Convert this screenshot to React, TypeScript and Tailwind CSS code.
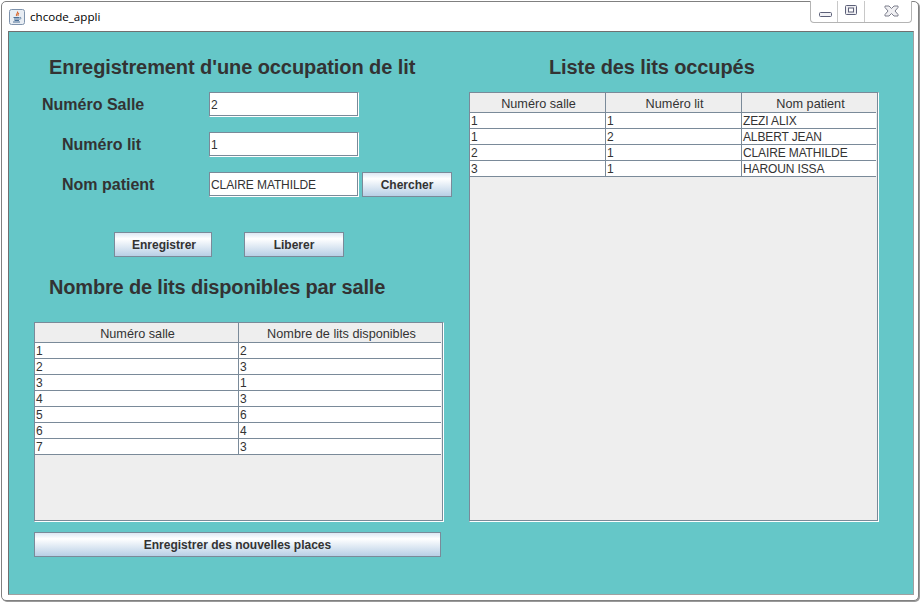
const sans = "font-['Liberation_Sans',Arial,sans-serif]";

function Field({ value }: { value: string }) {
  return (
    <div className="w-[150px] h-[25px] border border-[#7a8a99] border-r-white border-b-white shadow-[inset_-1px_-1px_0_#7a8a99] bg-white flex items-center pl-[1px] text-[12px] tracking-[-0.1px] text-[#333333]">
      {value}
    </div>
  );
}

function OceanButton({ label, className }: { label: string; className: string }) {
  return (
    <button
      className={`h-[25px] border border-[#7a8a99] bg-gradient-to-b from-[#dde8f3] via-white via-[25%] to-[#b8cfe5] text-[12px] font-bold text-[#333333] flex items-center justify-center ${className}`}
    >
      {label}
    </button>
  );
}

function DataTable({
  widths,
  headers,
  rows,
  className,
}: {
  widths: number[];
  headers: string[];
  rows: string[][];
  className: string;
}) {
  return (
    <div className={`w-[410px] border border-[#7a8a99] border-r-white border-b-white shadow-[inset_-1px_-1px_0_#7a8a99] bg-[#eeeeee] pr-[2px] pb-[2px] ${className}`}>
      <div className="flex h-[20px] border-b border-[#7a8a99]">
        {headers.map((h, i) => (
          <div
            key={h}
            style={{ width: widths[i] }}
            className="shrink-0 flex items-center justify-center text-[12.7px] text-[#333333] border-r border-[#7a8a99] pt-[5px] pb-[1px] pl-[2px]"
          >
            {h}
          </div>
        ))}
      </div>
      {rows.map((r, ri) => (
        <div key={ri} className="flex h-[16px] bg-white border-b border-[#7a8a99]">
          {r.map((c, i) => (
            <div
              key={i}
              style={{ width: widths[i] }}
              className="shrink-0 flex items-center pl-[1px] text-[12px] tracking-[-0.13px] text-[#333333] border-r border-[#7a8a99]"
            >
              {c}
            </div>
          ))}
        </div>
      ))}
    </div>
  );
}

function JavaIcon() {
  return (
    <svg width="16" height="16" viewBox="0 0 16 16" className="shrink-0">
      <rect x="0.5" y="0.5" width="15" height="15" rx="2" fill="#e8edf3" stroke="#7f93ac" />
      <path d="M8.500 2.500c1 1.500-2 2.500-1 4.500M10 4c-1.200.8-1.500 1.600-.8 3" fill="none" stroke="#d9662b" strokeWidth="1.1" />
      <path d="M4.500 8.500h6M5 10h5.500M5.500 11.500h4.500M4 13h7" fill="none" stroke="#4a6f96" strokeWidth="1" />
      <path d="M11 8.500c1.500-.3 1.500 1.500-.5 1.700" fill="none" stroke="#4a6f96" strokeWidth="0.8" />
    </svg>
  );
}

function WindowControls() {
  return (
    <div className="flex h-[22px] mt-[-1px] mr-[6px] border border-t-0 border-[#b4b4b4] rounded-b-[4px] bg-white">
      <div className="w-[27px] flex items-center justify-center border-r border-[#c8c8c8]">
        <svg width="13" height="6" viewBox="0 0 13 6" className="mt-[6px] ml-[2px]">
          <rect x="0.5" y="0.5" width="12" height="4" rx="1" fill="#f2f2f6" stroke="#5c6078" />
        </svg>
      </div>
      <div className="w-[27px] flex items-center justify-center border-r border-[#c8c8c8]">
        <svg width="12" height="11" viewBox="0 0 12 11" className="mb-[2px]">
          <rect x="0.5" y="0.500" width="11" height="9" rx="1" fill="#eeeef2" stroke="#5c6078" />
          <rect x="3.500" y="3" width="5" height="4" fill="#fff" stroke="#5c6078" />
        </svg>
      </div>
      <div className="w-[46px] flex items-center justify-center pl-[6px]">
        <svg width="15" height="12" viewBox="0 0 15 12" className="mb-[2px]">
          <path d="M1 1h4l2.500 2.500L10 1h4v1.500L11 6l3 3.500V11h-4L7.500 8.500 5 11H1V9.500L4 6 1 2.500z" fill="#f0f0f3" stroke="#7c7e8c" strokeWidth="1" />
        </svg>
      </div>
    </div>
  );
}

export default function App() {
  return (
    <div className={`w-[921px] h-[602px] bg-white overflow-hidden pt-px pl-px pr-[2px] pb-px ${sans}`}>
      <div className="w-full h-[600px] border border-[#808080] rounded-[5px] bg-white shadow-[1px_1px_0_#9a9a9a] flex flex-col">
        <div className="h-[29px] flex items-start justify-between shrink-0">
          <div className="flex items-center pl-[7px] pt-[7px] gap-[5px] font-['Open_Sans',sans-serif] text-[11.6px] text-black">
            <JavaIcon />
            <span className="leading-[16px]">chcode_appli</span>
          </div>
          <WindowControls />
        </div>
        <div className="ml-[6px] mr-[4px] h-[564px] border border-[#707070] border-r-[#a0a0a0] border-b-[#a0a0a0] bg-[#65c7c8] flex pl-[25px] pt-[24px]">
          <div className="w-[418px] flex flex-col shrink-0">
            <h1 className="pl-[15px] h-[22px] leading-[22px] text-[20px] tracking-[-0.08px] font-bold text-[#333333]">
              Enregistrement d'une occupation de lit
            </h1>
            <div className="mt-[14px] flex flex-col gap-[15px]">
              <div className="flex items-center h-[25px]">
                <span className="w-[175px] pl-[8px] text-[16px] font-bold text-[#333333]">Numéro Salle</span>
                <Field value="2" />
              </div>
              <div className="flex items-center h-[25px]">
                <span className="w-[175px] pl-[28px] text-[16px] font-bold text-[#333333]">Numéro lit</span>
                <Field value="1" />
              </div>
              <div className="flex items-center h-[25px]">
                <span className="w-[175px] pl-[28px] text-[16px] font-bold text-[#333333]">Nom patient</span>
                <Field value="CLAIRE MATHILDE" />
                <OceanButton label="Chercher" className="w-[90px] ml-[3px]" />
              </div>
            </div>
            <div className="mt-[35px] pl-[80px] flex gap-[32px]">
              <OceanButton label="Enregistrer" className="w-[98px] pl-[2px]" />
              <OceanButton label="Liberer" className="w-[100px]" />
            </div>
            <h2 className="mt-[19px] pl-[15px] h-[22px] leading-[22px] text-[20px] tracking-[-0.17px] font-bold text-[#333333]">
              Nombre de lits disponibles par salle
            </h2>
            <DataTable
              className="mt-[24px] h-[200px]"
              widths={[204, 204]}
              headers={["Numéro salle", "Nombre de lits disponibles"]}
              rows={[
                ["1", "2"],
                ["2", "3"],
                ["3", "1"],
                ["4", "3"],
                ["5", "6"],
                ["6", "4"],
                ["7", "3"],
              ]}
            />
            <OceanButton label="Enregistrer des nouvelles places" className="w-[407px] mt-[10px]" />
          </div>
          <div className="ml-[17px] w-[410px] flex flex-col shrink-0">
            <h1 className="pl-[80px] h-[22px] leading-[22px] text-[20px] tracking-[-0.1px] font-bold text-[#333333]">
              Liste des lits occupés
            </h1>
            <DataTable
              className="mt-[14px] h-[430px]"
              widths={[136, 136, 136]}
              headers={["Numéro salle", "Numéro lit", "Nom patient"]}
              rows={[
                ["1", "1", "ZEZI ALIX"],
                ["1", "2", "ALBERT JEAN"],
                ["2", "1", "CLAIRE MATHILDE"],
                ["3", "1", "HAROUN ISSA"],
              ]}
            />
          </div>
        </div>
      </div>
    </div>
  );
}
